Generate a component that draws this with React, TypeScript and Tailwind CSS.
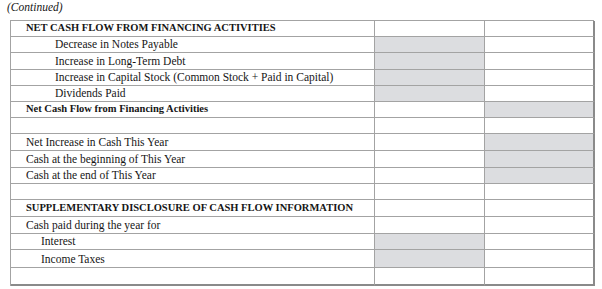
import React from "react";

type Row = { text: string; pad: string; bold?: boolean; s2?: boolean; s3?: boolean; h: string };

const rows: Row[] = [
  { text: "NET CASH FLOW FROM FINANCING ACTIVITIES", pad: "pl-[15px]", bold: true, h: "h-[16px]" },
  { text: "Decrease in Notes Payable", pad: "pl-[44px]", s2: true, h: "h-[16px]" },
  { text: "Increase in Long-Term Debt", pad: "pl-[44px]", s2: true, h: "h-[17px]" },
  { text: "Increase in Capital Stock (Common Stock + Paid in Capital)", pad: "pl-[44px]", s2: true, h: "h-[16px]" },
  { text: "Dividends Paid", pad: "pl-[44px]", s2: true, h: "h-[16px]" },
  { text: "Net Cash Flow from Financing Activities", pad: "pl-[15px]", bold: true, s3: true, h: "h-[16px]" },
  { text: "", pad: "pl-[15px]", h: "h-[16px]" },
  { text: "Net Increase in Cash This Year", pad: "pl-[15px]", s3: true, h: "h-[17px]" },
  { text: "Cash at the beginning of This Year", pad: "pl-[15px]", s3: true, h: "h-[17px]" },
  { text: "Cash at the end of This Year", pad: "pl-[15px]", s3: true, h: "h-[16px]" },
  { text: "", pad: "pl-[15px]", h: "h-[16px]" },
  { text: "SUPPLEMENTARY DISCLOSURE OF CASH FLOW INFORMATION", pad: "pl-[15px]", bold: true, h: "h-[17px]" },
  { text: "Cash paid during the year for", pad: "pl-[15px]", h: "h-[17px]" },
  { text: "Interest", pad: "pl-[30px]", s2: true, h: "h-[16px]" },
  { text: "Income Taxes", pad: "pl-[30px]", s2: true, h: "h-[18px]" },
  { text: "", pad: "pl-[15px]", h: "h-[18px]" },
];

export default function App() {
  return (
    <div className="w-[602px] h-[289px] bg-white text-[#161616] overflow-hidden font-['Liberation_Serif','Times_New_Roman',serif]">
      <div className="pl-[7px] pt-[1px] h-[20px] text-[11.5px] italic leading-[13px]">(Continued)</div>
      <div className="ml-[10px] w-[584px] border-t border-l border-[#a3a3a3] grid grid-cols-[364px_110px_110px]">
        {rows.map((r, i) => {
          const last = i === rows.length - 1;
          const bb = last ? "border-b-2 border-b-[#8a8a8a]" : "border-b border-b-[#a3a3a3]";
          return (
            <React.Fragment key={i}>
              <div
                className={`box-border border-r border-r-[#a3a3a3] ${bb} ${r.h} ${r.pad} flex items-end pb-[2px] leading-[12px] whitespace-nowrap ${r.bold ? "font-bold text-[10.5px]" : "text-[11.5px]"}`}
              >
                {r.text}
              </div>
              <div className={`box-border border-r border-r-[#a3a3a3] ${bb} ${r.h} ${r.s2 ? "bg-[#dcdde0]" : "bg-white"}`} />
              <div className={`box-border border-r-2 border-r-[#8a8a8a] ${bb} ${r.h} ${r.s3 ? "bg-[#dcdde0]" : "bg-white"}`} />
            </React.Fragment>
          );
        })}
      </div>
    </div>
  );
}
